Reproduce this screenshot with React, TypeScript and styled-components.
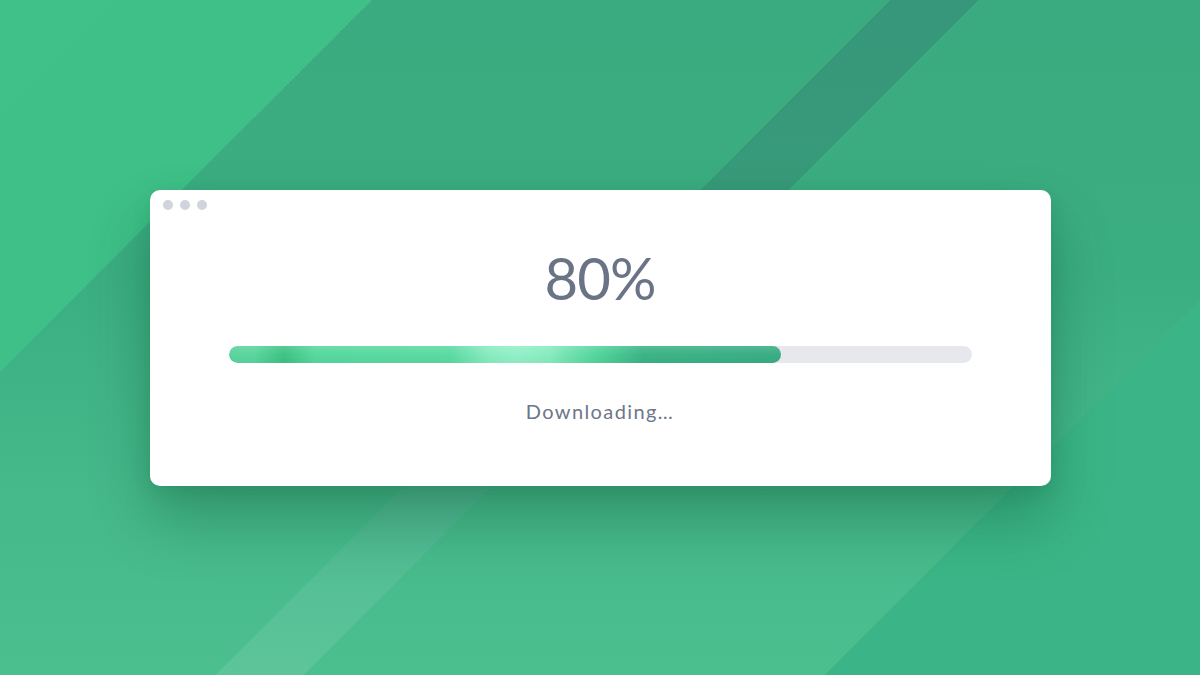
import React from "react";
import styled, { createGlobalStyle } from "styled-components";

const GlobalStyle = createGlobalStyle`
  html, body {
    margin: 0;
    padding: 0;
    width: 100%;
    height: 100%;
    overflow: hidden;
  }
  body {
    font-family: Lato, "Open Sans", "Liberation Sans", sans-serif;
  }
`;

const Page = styled.main`
  position: relative;
  width: 100vw;
  height: 100vh;
  display: flex;
  align-items: center;
  justify-content: center;
  overflow: hidden;
  background:
    linear-gradient(135deg, #3fc189 0%, #3ec088 19.84%, transparent 19.84%),
    linear-gradient(135deg, transparent 80%, #3bb587 80%),
    linear-gradient(to bottom, #3aab80 0%, #3bae81 40%, #45b98a 72%, #4bbf8e 100%);

  &::before {
    content: "";
    position: absolute;
    inset: 0;
    background: linear-gradient(to bottom, #36977a 0%, #389c79 40%, #4db891 72%, #5dc599 100%);
    -webkit-mask-image: linear-gradient(135deg, transparent 47.5%, #000 47.5%, #000 52.2%, transparent 52.2%);
    mask-image: linear-gradient(135deg, transparent 47.5%, #000 47.5%, #000 52.2%, transparent 52.2%);
  }
`;

const Window = styled.section`
  position: relative;
  z-index: 1;
  box-sizing: border-box;
  width: 901px;
  height: 296px;
  background: #ffffff;
  border-radius: 10px;
  display: flex;
  flex-direction: column;
  padding: 10px 13px 0;
  box-shadow: 0 34px 60px rgba(10, 70, 45, 0.32), 0 6px 18px rgba(10, 70, 45, 0.12);
`;

const TitleBar = styled.div`
  display: flex;
  gap: 7px;
`;

const Dot = styled.span`
  width: 10px;
  height: 10px;
  border-radius: 50%;
  background: #d0d4dd;
`;

const Body = styled.div`
  display: flex;
  flex-direction: column;
  align-items: center;
  padding-top: 33px;
`;

const Percent = styled.h1`
  margin: 0;
  font-family: Lato, "Open Sans", sans-serif;
  font-weight: 400;
  font-size: 58px;
  line-height: 70px;
  color: #6b7386;
  letter-spacing: -1px;
`;

const Track = styled.div`
  width: 743px;
  height: 17px;
  margin-top: 33px;
  border-radius: 9px;
  background: #e6e8ee;
  overflow: hidden;
  display: flex;
`;

const Fill = styled.div`
  height: 100%;
  border-radius: 9px;
  background:
    linear-gradient(to bottom, rgba(255, 255, 255, 0.12), rgba(255, 255, 255, 0) 50%, rgba(0, 0, 0, 0.03)),
    linear-gradient(
      to right,
      #5bd49e 0%,
      #5bd59e 4.5%,
      #3ec383 10%,
      #58d89f 15.5%,
      #5cdaa3 40%,
      #88ecc0 47%,
      #92f0c8 52%,
      #88ecc0 58%,
      #6ee0ae 62%,
      #52d49b 67%,
      #3cb487 75%,
      #3aad85 100%
    );
`;

const Status = styled.p`
  margin: 37px 0 0;
  font-family: Lato, "Open Sans", sans-serif;
  font-size: 20px;
  line-height: 22px;
  color: #6e7688;
  letter-spacing: 1.4px;
`;

export default function App() {
  const progress = 74.4;
  return (
    <>
      <GlobalStyle />
      <Page>
        <Window>
          <TitleBar>
            <Dot />
            <Dot />
            <Dot />
          </TitleBar>
          <Body>
            <Percent>80%</Percent>
            <Track>
              <Fill style={{ width: `${progress}%` }} />
            </Track>
            <Status>Downloading…</Status>
          </Body>
        </Window>
      </Page>
    </>
  );
}
